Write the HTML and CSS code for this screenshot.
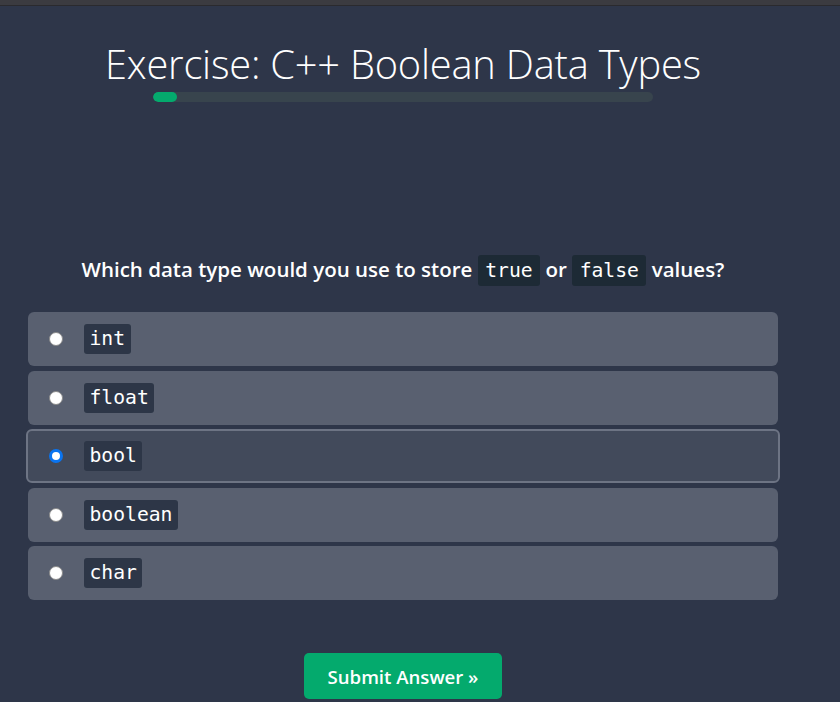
FILE: index.html
```html
<!DOCTYPE html>
<html>
<head>
<meta charset="utf-8">
<link rel="stylesheet" href="styles.css">
</head>
<body>
<div class="topstrip"></div>
<main class="wrap">
  <h1 class="title">Exercise: C++ Boolean Data Types</h1>
  <div class="progress"><div class="progress-fill" style="width:24px"></div></div>
  <p class="question">Which data type would you use to store <code class="qcode">true</code> or <code class="qcode">false</code> values?</p>
  <div class="options">
    <label class="option"><span class="radio"></span><code class="ocode">int</code></label>
    <label class="option"><span class="radio"></span><code class="ocode">float</code></label>
    <label class="option selected"><span class="radio checked"></span><code class="ocode">bool</code></label>
    <label class="option"><span class="radio"></span><code class="ocode">boolean</code></label>
    <label class="option"><span class="radio"></span><code class="ocode">char</code></label>
  </div>
  <div class="actions"><button class="submit">Submit Answer »</button></div>
</main>
</body>
</html>
```
FILE: styles.css
```css
html, body {
  margin: 0;
  padding: 0;
  background: #2e3649;
  height: 100%;
  overflow: hidden;
}
.topstrip {
  height: 5px;
  background: #3b3b40;
  border-bottom: 1px solid #2a2a2e;
}
.wrap {
  width: 750px;
  margin-left: 28px;
  display: flex;
  flex-direction: column;
}
.title {
  margin: 35px 0 0;
  text-align: center;
  font-family: "Open Sans", sans-serif;
  font-weight: 300;
  font-size: 39.8px;
  line-height: 46px;
  color: #ffffff;
  letter-spacing: -0.2px;
  white-space: nowrap;
}
.progress {
  align-self: center;
  width: 500px;
  height: 10px;
  margin-top: 5px;
  border-radius: 5px;
  background: #38444d;
  overflow: hidden;
}
.progress-fill {
  height: 100%;
  background: #04aa6d;
  border-radius: 5px;
}
.question {
  margin: 151px 0 0;
  text-align: center;
  font-family: "Open Sans", sans-serif;
  font-weight: 600;
  font-size: 20.5px;
  line-height: 32px;
  color: #ffffff;
  white-space: nowrap;
}
.qcode {
  display: inline-block;
  font-family: "DejaVu Sans Mono", monospace;
  font-weight: 400;
  font-size: 19.7px;
  line-height: 31px;
  padding: 0 7.5px;
  background: #1d2a35;
  border-radius: 3px;
}
.options {
  margin-top: 26px;
  display: flex;
  flex-direction: column;
  gap: 4.5px;
}
.option {
  height: 54px;
  box-sizing: border-box;
  display: flex;
  align-items: center;
  background: #596070;
  border-radius: 6px;
  padding-left: 21px;
}
.option.selected {
  background: #424a5b;
  border: 2px solid #6d7484;
  margin: 0 -2px;
  padding-left: 21px;
}
.radio {
  width: 14px;
  height: 14px;
  box-sizing: border-box;
  border-radius: 50%;
  background: #ffffff;
  border: 1px solid #8a8a8a;
  flex: none;
}
.radio.checked {
  border: 3.5px solid #0a74f0;
  background: #ffffff;
}
.ocode {
  margin-left: 21px;
  display: inline-block;
  font-family: "DejaVu Sans Mono", monospace;
  font-size: 19.7px;
  line-height: 30px;
  padding: 0 5.5px;
  color: #ffffff;
  background: #2d3647;
  border-radius: 3px;
}
.actions {
  display: flex;
  justify-content: center;
  margin-top: 53px;
}
.submit {
  width: 198px;
  height: 46px;
  border: none;
  border-radius: 5px;
  background: #04aa6d;
  color: #ffffff;
  font-family: "Open Sans", sans-serif;
  font-weight: 600;
  font-size: 18.6px;
  cursor: pointer;
}
```
